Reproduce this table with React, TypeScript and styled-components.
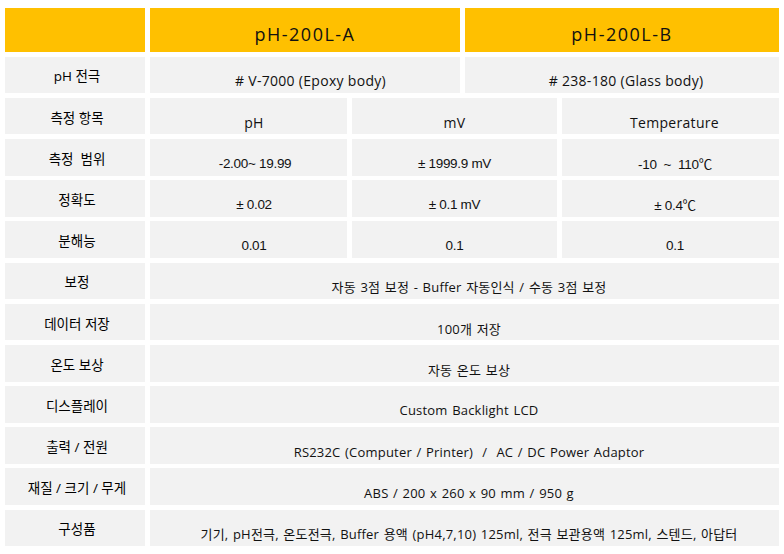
import React from "react";
import styled, { createGlobalStyle } from "styled-components";

const GlobalStyle = createGlobalStyle`
  html, body { margin: 0; padding: 0; background: #ffffff; }
  body { font-family: "Open Sans", "Noto Sans CJK KR", sans-serif; color: #000; }
`;

const SpecTable = styled.div`
  display: grid;
  grid-template-columns: 140px 197px 108px 92px 217px;
  grid-template-rows: 44px repeat(12, 36.6px);
  column-gap: 5px;
  row-gap: 4.6px;
  padding: 8px 5px 0 5px;
  width: 779px;
  box-sizing: border-box;
`;

const Cell = styled.div<{ $col?: string }>`
  display: flex;
  align-items: center;
  justify-content: center;
  grid-column: ${(p) => p.$col ?? "auto"};
  white-space: pre;
  box-sizing: border-box;
`;

const HeadCell = styled(Cell)`
  background: #ffc000;
  font-family: "Open Sans", "Noto Sans CJK KR", sans-serif;
  font-size: 18px;
  letter-spacing: 1.5px;
  padding-top: 8px;
  color: #111;
`;

const LabelCell = styled(Cell)`
  background: #f2f2f2;
  font-family: "Open Sans", "Noto Sans CJK KR", sans-serif;
  font-size: 13.5px;
  padding-left: 4px;
  padding-top: 1px;
  color: #000;
`;

type Kind = "text" | "large" | "num";

const ValueCell = styled(Cell)<{ $shift?: number; $kind: Kind }>`
  background: #f2f2f2;
  font-family: ${(p) =>
    p.$kind === "num"
      ? `"Liberation Sans", "Noto Sans CJK KR", sans-serif`
      : `"Open Sans", "Noto Sans CJK KR", sans-serif`};
  font-size: ${(p) => (p.$kind === "num" ? "13.5px" : p.$kind === "large" ? "14px" : "13px")};
  letter-spacing: ${(p) => (p.$kind === "num" ? "-0.3px" : p.$kind === "large" ? "0.3px" : "0.2px")};
  word-spacing: ${(p) => (p.$kind === "text" ? "1px" : "0")};
  padding-top: 12px;
  padding-left: ${(p) => p.$shift ?? 9}px;
  color: #111;
`;

type Row = {
  label: string;
  values: { text: string; col: string; kind?: Kind; shift?: number }[];
};

const rows: Row[] = [
  {
    label: "pH 전극",
    values: [
      { text: "# V-7000 (Epoxy body)", col: "2 / 4", kind: "large", shift: 11 },
      { text: "# 238-180 (Glass body)", col: "4 / 6", kind: "large", shift: 8 },
    ],
  },
  {
    label: "측정 항목",
    values: [
      { text: "pH", col: "2 / 3", kind: "large", shift: 11 },
      { text: "mV", col: "3 / 5", kind: "large", shift: 0 },
      { text: "Temperature", col: "5 / 6", kind: "large", shift: 8 },
    ],
  },
  {
    label: "측정  범위",
    values: [
      { text: "-2.00~ 19.99", col: "2 / 3", kind: "num", shift: 13 },
      { text: "± 1999.9 mV", col: "3 / 5", kind: "num", shift: 0 },
      { text: "-10  ~  110℃", col: "5 / 6", kind: "num", shift: 9 },
    ],
  },
  {
    label: "정확도",
    values: [
      { text: "± 0.02", col: "2 / 3", kind: "num", shift: 11 },
      { text: "± 0.1 mV", col: "3 / 5", kind: "num", shift: 0 },
      { text: "± 0.4℃", col: "5 / 6", kind: "num", shift: 9 },
    ],
  },
  {
    label: "분해능",
    values: [
      { text: "0.01", col: "2 / 3", kind: "num", shift: 11 },
      { text: "0.1", col: "3 / 5", kind: "num", shift: 0 },
      { text: "0.1", col: "5 / 6", kind: "num", shift: 9 },
    ],
  },
  {
    label: "보정",
    values: [{ text: "자동 3점 보정 - Buffer 자동인식 / 수동 3점 보정", col: "2 / 6" }],
  },
  { label: "데이터 저장", values: [{ text: "100개 저장", col: "2 / 6" }] },
  { label: "온도 보상", values: [{ text: "자동 온도 보상", col: "2 / 6" }] },
  { label: "디스플레이", values: [{ text: "Custom Backlight LCD", col: "2 / 6" }] },
  {
    label: "출력 / 전원",
    values: [{ text: "RS232C (Computer / Printer)  /  AC / DC Power Adaptor", col: "2 / 6" }],
  },
  {
    label: "재질 / 크기 / 무게",
    values: [{ text: "ABS / 200 x 260 x 90 mm / 950 g", col: "2 / 6" }],
  },
  {
    label: "구성품",
    values: [
      {
        text: "기기, pH전극, 온도전극, Buffer 용액 (pH4,7,10) 125ml, 전극 보관용액 125ml, 스텐드, 아답터",
        col: "2 / 6",
      },
    ],
  },
];

export default function App() {
  return (
    <>
      <GlobalStyle />
      <SpecTable>
        <HeadCell $col="1 / 2" />
        <HeadCell $col="2 / 4">pH-200L-A</HeadCell>
        <HeadCell $col="4 / 6">pH-200L-B</HeadCell>
        {rows.map((r) => (
          <React.Fragment key={r.label}>
            <LabelCell $col="1 / 2">{r.label}</LabelCell>
            {r.values.map((v, i) => (
              <ValueCell key={i} $col={v.col} $kind={v.kind ?? "text"} $shift={v.shift}>
                {v.text}
              </ValueCell>
            ))}
          </React.Fragment>
        ))}
      </SpecTable>
    </>
  );
}
